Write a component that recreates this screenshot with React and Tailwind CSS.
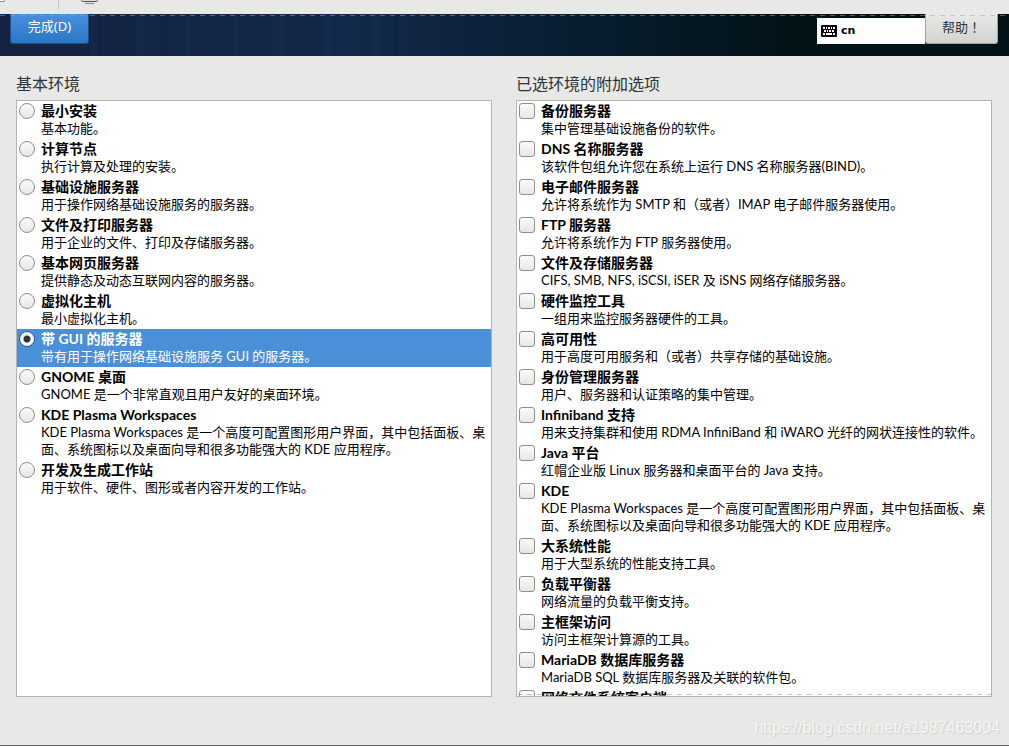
import { useState } from "react";

const environments = [
  { title: "最小安装", text: "基本功能。" },
  { title: "计算节点", text: "执行计算及处理的安装。" },
  { title: "基础设施服务器", text: "用于操作网络基础设施服务的服务器。" },
  { title: "文件及打印服务器", text: "用于企业的文件、打印及存储服务器。" },
  { title: "基本网页服务器", text: "提供静态及动态互联网内容的服务器。" },
  { title: "虚拟化主机", text: "最小虚拟化主机。" },
  { title: "带 GUI 的服务器", text: "带有用于操作网络基础设施服务 GUI 的服务器。" },
  { title: "GNOME 桌面", text: "GNOME 是一个非常直观且用户友好的桌面环境。" },
  {
    title: "KDE Plasma Workspaces",
    text: "KDE Plasma Workspaces 是一个高度可配置图形用户界面，其中包括面板、桌面、系统图标以及桌面向导和很多功能强大的 KDE 应用程序。",
  },
  { title: "开发及生成工作站", text: "用于软件、硬件、图形或者内容开发的工作站。" },
];

const addons = [
  { title: "备份服务器", text: "集中管理基础设施备份的软件。" },
  { title: "DNS 名称服务器", text: "该软件包组允许您在系统上运行 DNS 名称服务器(BIND)。" },
  { title: "电子邮件服务器", text: "允许将系统作为 SMTP 和（或者）IMAP 电子邮件服务器使用。" },
  { title: "FTP 服务器", text: "允许将系统作为 FTP 服务器使用。" },
  { title: "文件及存储服务器", text: "CIFS, SMB, NFS, iSCSI, iSER 及 iSNS 网络存储服务器。" },
  { title: "硬件监控工具", text: "一组用来监控服务器硬件的工具。" },
  { title: "高可用性", text: "用于高度可用服务和（或者）共享存储的基础设施。" },
  { title: "身份管理服务器", text: "用户、服务器和认证策略的集中管理。" },
  { title: "Infiniband 支持", text: "用来支持集群和使用 RDMA InfiniBand 和 iWARO 光纤的网状连接性的软件。" },
  { title: "Java 平台", text: "红帽企业版 Linux 服务器和桌面平台的 Java 支持。" },
  {
    title: "KDE",
    text: "KDE Plasma Workspaces 是一个高度可配置图形用户界面，其中包括面板、桌面、系统图标以及桌面向导和很多功能强大的 KDE 应用程序。",
  },
  { title: "大系统性能", text: "用于大型系统的性能支持工具。" },
  { title: "负载平衡器", text: "网络流量的负载平衡支持。" },
  { title: "主框架访问", text: "访问主框架计算源的工具。" },
  { title: "MariaDB 数据库服务器", text: "MariaDB SQL 数据库服务器及关联的软件包。" },
  { title: "网络文件系统客户端" },
];

function Option({ type, name, title, text, checked, onChange }) {
  const selected = type === "radio" && checked;
  return (
    <label
      className={`flex gap-[6px] py-[2px] pl-[2px] font-[Lato,'Noto_Sans_CJK_SC',sans-serif] ${
        selected ? "bg-[#4a90d9] text-white" : "text-black"
      }`}
    >
      <input
        type={type}
        name={name}
        checked={checked}
        onChange={onChange}
        className={`size-4 shrink-0 appearance-none border border-[#8f8f8b] bg-linear-to-b from-[#fbfbfb] to-[#e6e6e4] ${
          type === "radio"
            ? "rounded-full checked:border-[#2c5d94] checked:bg-[radial-gradient(circle,#2e3436_0_3px,#f6f6f5_4px)]"
            : "rounded-[3px] checked:bg-[#4a90d9]"
        }`}
      />
      <span className="min-w-0 flex-1">
        <span className="block pb-[2px] text-[14px] leading-[15px] font-bold">{title}</span>
        {text && <span className="block text-[13px] leading-[17px]">{text}</span>}
      </span>
    </label>
  );
}

function Panel({ title, children }) {
  return (
    <section className="flex min-h-0 min-w-0 flex-1 flex-col">
      <h2 className="h-7 text-[16px] leading-6 text-[#2e3436]">{title}</h2>
      <div className="relative min-h-0 flex-1 overflow-hidden border border-[#b4b4b0] bg-white">
        {children}
      </div>
    </section>
  );
}

function KeyboardIcon() {
  return (
    <svg width="16" height="12" viewBox="0 0 16 12" aria-hidden="true">
      <rect width="16" height="12" rx="1" fill="#000" />
      <g fill="#fff" shapeRendering="crispEdges">
        <path d="M2 2h2v2H2zM5 2h1v2H5zM7 2h2v2H7zM10 2h1v2h-1zM12 2h2v2h-2z" />
        <path d="M3 5h2v2H3zM6 5h1v2H6zM8 5h2v2H8zM11 5h2v2h-2z" />
        <path d="M2 8h2v2H2zM5 8h6v2H5zM12 8h2v2h-2z" />
      </g>
    </svg>
  );
}

function MonitorIcon() {
  return (
    <svg width="17" height="4" viewBox="0 0 17 4" aria-hidden="true">
      <path d="M.5 0v.5q0 1 1 1h14q1 0 1-1V0" fill="#ddd" stroke="#555" />
      <path d="M4 3.5h9" stroke="#888" />
    </svg>
  );
}

const dashes =
  "pointer-events-none absolute inset-x-0 h-px bg-[repeating-linear-gradient(90deg,#9da3a7_0_5px,transparent_5px_10px)]";

export default function App() {
  const [environment, setEnvironment] = useState(6);
  const [picked, setPicked] = useState([]);

  const toggle = (index) =>
    setPicked((list) =>
      list.includes(index) ? list.filter((i) => i !== index) : [...list, index]
    );

  return (
    <div className="flex h-screen flex-col overflow-hidden bg-[#e8e8e6] font-['Noto_Sans','Noto_Sans_CJK_SC',sans-serif]">
      <div className="flex h-[14px] shrink-0 items-start">
        <span className="h-[2px] w-[5px] rounded-br-sm border-r border-b border-[#888] bg-white" />
        <span className="ml-[53px] h-[10px] w-px bg-[#cacac8]" />
        <span className="ml-[22px]">
          <MonitorIcon />
        </span>
      </div>

      <header className="relative flex h-[42px] shrink-0 items-start justify-between bg-linear-to-r from-[#14233f] via-[#12294b] via-35% to-[#021216] to-80% pr-[11px] pl-[10px]">
        <div className="pointer-events-none absolute inset-y-0 left-20 w-80 bg-[repeating-linear-gradient(90deg,transparent_0_9px,#1c3b6322_12px_15px,transparent_19px_31px,#0a1c3d22_34px_37px,transparent_40px_47px)]" />
        <button className="relative h-[30px] w-[79px] rounded-b-[3px] border border-t-0 border-[#1c5187] bg-linear-to-b from-[#4790dd] to-[#2a76c6] pb-1 text-[13px] leading-[25px] text-white">
          完成(D)
        </button>
        <div className="relative flex items-start">
          <button className="mt-1 flex h-[26px] w-[108px] items-center gap-1 bg-[#fdfdfd] pl-1 font-['DejaVu_Sans',sans-serif] text-[11px] font-bold text-black">
            <KeyboardIcon />
            cn
          </button>
          <button className="h-[30px] w-[73px] rounded-b-[3px] border border-t-0 border-[#a4a4a0] bg-linear-to-b from-[#e9e9e8] to-[#d2d2d0] pb-1 font-['Noto_Sans_CJK_TC',sans-serif] text-[13px] leading-[25px] text-[#2e3436]">
            帮助！
          </button>
        </div>
        <div className={`${dashes} top-px opacity-50`} />
      </header>

      <main className="flex min-h-0 flex-1 gap-6 px-4 pt-4 pr-[17px]">
        <Panel title="基本环境">
          {environments.map((item, index) => (
            <Option
              key={item.title}
              type="radio"
              name="environment"
              title={item.title}
              text={item.text}
              checked={environment === index}
              onChange={() => setEnvironment(index)}
            />
          ))}
        </Panel>
        <Panel title="已选环境的附加选项">
          {addons.map((item, index) => (
            <Option
              key={item.title}
              type="checkbox"
              name="addon"
              title={item.title}
              text={item.text}
              checked={picked.includes(index)}
              onChange={() => toggle(index)}
            />
          ))}
          <div className={`${dashes} bottom-px opacity-60`} />
        </Panel>
      </main>

      <footer className="flex h-[50px] shrink-0 flex-col justify-between">
        <p className="pt-[20px] pr-[9px] text-right font-['Liberation_Sans',sans-serif] text-[16px] leading-[22px] text-[#f6f6f6] [text-shadow:1px_1px_1px_#ccc]">
          https://blog.csdn.net/a1987463004
        </p>
        <div className="h-[2px] border-t border-[#666] bg-[#f2f2f2]" />
      </footer>
    </div>
  );
}
